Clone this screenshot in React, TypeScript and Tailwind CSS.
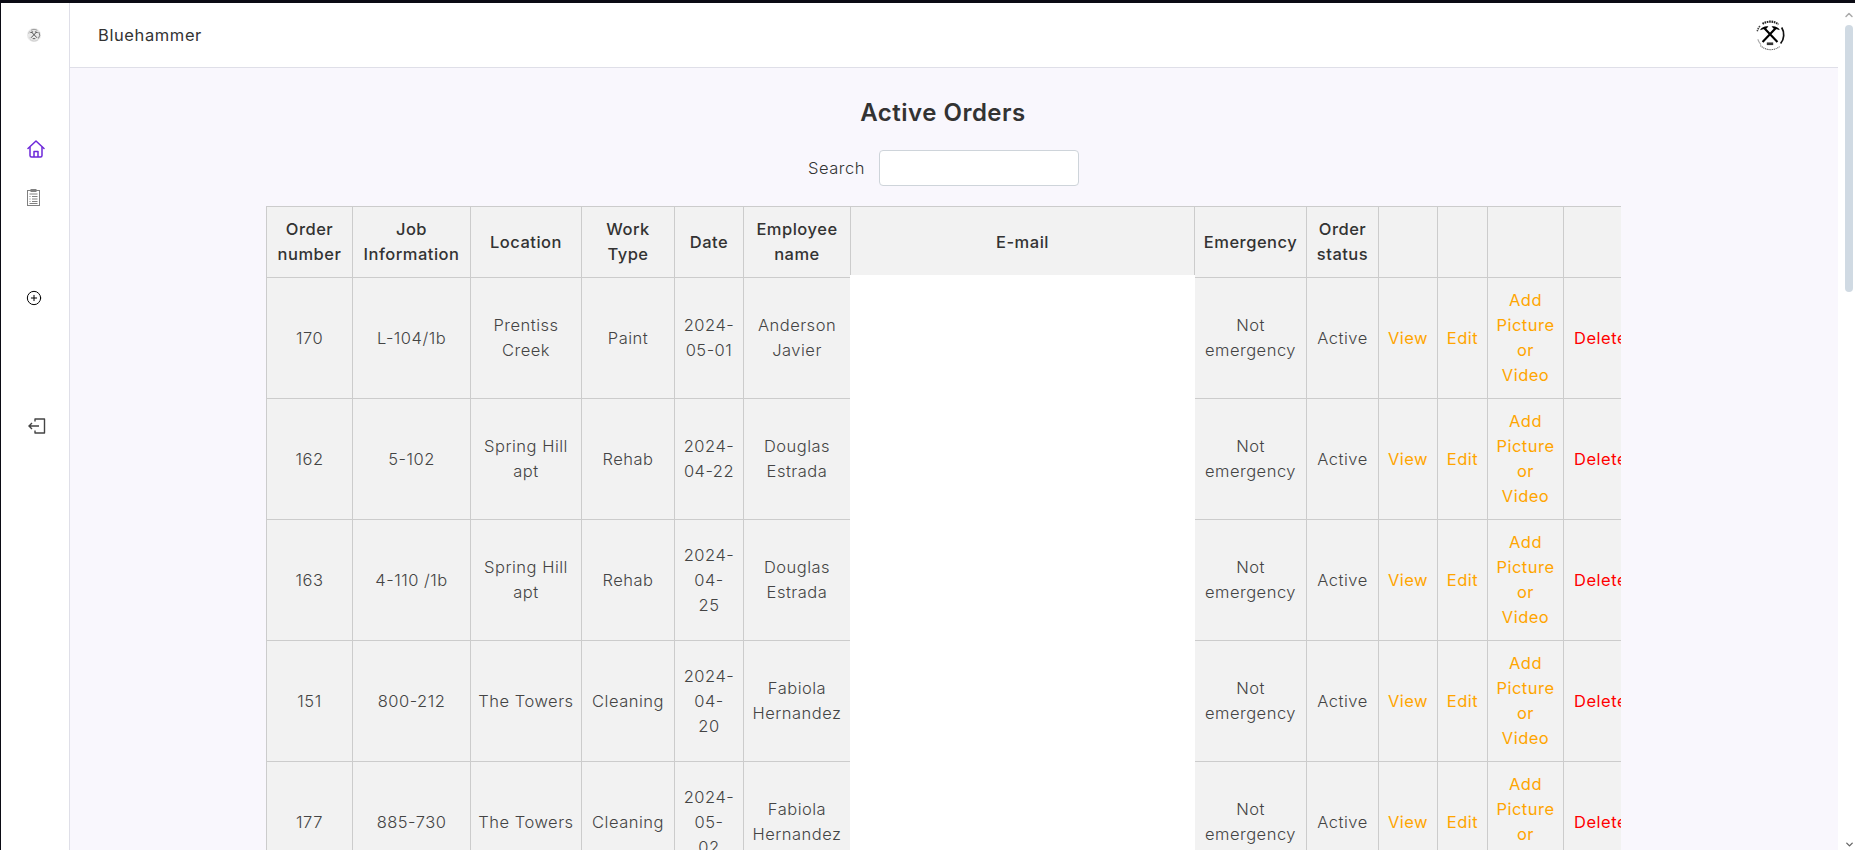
import { ChevronDown, ChevronUp, CirclePlus } from 'lucide-react'

const orders = [
  { id: '170', job: 'L-104/1b', location: 'Prentiss Creek', type: 'Paint', date: '2024-\n05-01', name: 'Anderson Javier' },
  { id: '162', job: '5-102', location: 'Spring Hill apt', type: 'Rehab', date: '2024-\n04-22', name: 'Douglas Estrada' },
  { id: '163', job: '4-110 /1b', location: 'Spring Hill apt', type: 'Rehab', date: '2024-\n04-\n25', name: 'Douglas Estrada' },
  { id: '151', job: '800-212', location: 'The Towers', type: 'Cleaning', date: '2024-\n04-\n20', name: 'Fabiola Hernandez' },
  { id: '177', job: '885-730', location: 'The Towers', type: 'Cleaning', date: '2024-\n05-\n02', name: 'Fabiola Hernandez' },
]

const headers = [
  'Order number',
  'Job Information',
  'Location',
  'Work Type',
  'Date',
  'Employee name',
  'E-mail',
  'Emergency',
  'Order status',
  '',
  '',
  '',
  '',
]

const colClasses = [
  'w-[86px]',
  'w-[118px]',
  'w-[111px]',
  'w-[93px]',
  'w-[69px]',
  'w-[107px]',
  'w-[344px]',
  'w-[112px]',
  'w-[72px]',
  'w-[59px]',
  'w-[50px]',
  'w-[76px]',
  'w-[80px]',
]

function PickaxeLogo({ className }: { className: string }) {
  return (
    <svg viewBox="0 0 32 32" className={className}>
      <path d="M9 5.500a13 13 0 0 1 15 .5" fill="none" stroke="#222" strokeWidth="2" strokeDasharray="1.500 .7" />
      <path d="M6.500 7.500a13 13 0 0 0-2.500 5" fill="none" stroke="#444" strokeWidth="1.500" strokeDasharray="1.500 .7" />
      <path d="M27 9a13 13 0 0 1-1 15" fill="none" stroke="#111" strokeWidth="1.600" />
      <path d="M4.500 20a13 13 0 0 0 3 5" fill="none" stroke="#aaa" strokeWidth="1" />
      <path d="M7 26a14 14 0 0 0 18 1" fill="none" stroke="#555" strokeWidth="1" strokeDasharray="1 .7" />
      <path d="M9 22.500 21.500 9.500M23 22.500 10.500 9.500" stroke="#000" strokeWidth="2" />
      <path d="M17.500 8c3-.5 6 .5 8 3.500-2-1-4-1.500-6-1.500zM14.500 8c-3-.5-6 .5-8 3.500 2-1 4-1.500 6-1.500z" fill="#000" />
      <rect x="13" y="23" width="6" height="2.500" fill="#333" />
    </svg>
  )
}

function Sidebar() {
  return (
    <aside className="flex w-[69px] shrink-0 flex-col border-r border-[#dfdfe8] bg-white">
      <div className="flex h-[64px] shrink-0 items-center pl-[26px]">
        <PickaxeLogo className="h-[14px] w-[14px] rounded-full bg-[#e2e2e2] opacity-75" />
      </div>
      <div className="mt-[73px] pl-[26px]">
        <svg viewBox="0 0 18 18" className="h-[18px] w-[18px]" fill="none" stroke="#6d28d9" strokeWidth="1.500" strokeLinejoin="round">
          <path d="M1 8.500 9 1l8 7.500" strokeLinecap="round" />
          <path d="M3 7v8.500a1.500 1.500 0 0 0 1.500 1.500h9a1.500 1.500 0 0 0 1.500-1.500V7" />
          <path d="M7 17v-5.500h4V17" />
        </svg>
      </div>
      <div className="mt-[31px] pl-[26px]">
        <svg viewBox="0 0 14 17" className="h-[17px] w-[14px]" fill="none" stroke="#808080" strokeWidth="1">
          <rect x=".5" y="1.500" width="12" height="15" />
          <rect x="4" y=".5" width="5" height="2" fill="#808080" />
          <path d="M2.500 5h8M2.500 7.500h1M5 7.500h5.500M2.500 10h1M5 10h5.500M2.500 12.500h1M5 12.500h5.500M2.500 14.500h8" />
        </svg>
      </div>
      <div className="mt-[84px] pl-[25px]">
        <CirclePlus className="h-[16px] w-[16px] text-black" strokeWidth={1.500} />
      </div>
      <div className="mt-[112px] pl-[27px]">
        <svg viewBox="0 0 18 16" className="h-[16px] w-[18px]" fill="none" stroke="#444" strokeWidth="1.400">
          <path d="M7 3.500V1h9.500v14H7v-2.500" strokeLinejoin="round" />
          <path d="M11 8H1M4 5 1 8l3 3" />
        </svg>
      </div>
    </aside>
  )
}

export default function App() {
  return (
    <div className="flex h-[850px] w-[1855px] flex-col overflow-hidden bg-white font-['Inter','Liberation_Sans',sans-serif] text-[#333]">
      <div className="h-[3px] shrink-0 bg-[#0b0b14]" />
      <div className="flex min-h-0 flex-1">
        <div className="w-px shrink-0 bg-[#0b0b14]" />
        <Sidebar />
        <div className="flex min-w-0 flex-1 flex-col">
          <header className="flex h-[65px] shrink-0 items-center justify-between border-b border-[#dfdfe8] bg-white pl-[28px] pr-[51px]">
            <span className="text-[16.500px] tracking-[0.6px] text-[#333]">Bluehammer</span>
            <PickaxeLogo className="h-[34px] w-[34px]" />
          </header>
          <main className="min-h-0 flex-1 overflow-hidden bg-[#f9f7fd]">
            <h1 className="mt-[30px] w-[1746px] text-center text-[24px] leading-[30px] font-semibold tracking-[0.5px] text-[#333]">
              Active Orders
            </h1>
            <div className="mt-[22px] flex w-[1747px] items-center justify-center gap-[14px]">
              <label className="text-[16.500px] font-light tracking-[0.5px] text-[#333]">Search</label>
              <input className="h-[36px] w-[200px] rounded border border-[#ced4da] bg-white" />
            </div>
            <div className="relative mt-[20px] ml-[196px] w-[1355px] overflow-hidden">
              <table className="w-[1377px] table-fixed border-collapse text-center text-[16.500px] leading-[25px] tracking-[0.5px]">
                <colgroup>
                  {colClasses.map((c, i) => (
                    <col key={i} className={c} />
                  ))}
                </colgroup>
                <thead>
                  <tr className="h-[71px] bg-[#f2f2f2]">
                    {headers.map((h, i) => (
                      <th key={i} className="border border-[#ccc] px-[8px] font-medium text-[#333]">
                        {h}
                      </th>
                    ))}
                  </tr>
                </thead>
                <tbody>
                  {orders.map((o) => (
                    <tr key={o.id} className="h-[121px] bg-[#f2f2f2] font-light text-[#444]">
                      <td className="border border-[#ccc] px-[8px]">{o.id}</td>
                      <td className="border border-[#ccc] px-[8px]">{o.job}</td>
                      <td className="border border-[#ccc] px-[4px]">{o.location}</td>
                      <td className="border border-[#ccc] px-[8px]">{o.type}</td>
                      <td className="border border-[#ccc] px-[8px] whitespace-pre-line">{o.date}</td>
                      <td className="border border-[#ccc] px-[8px]">{o.name}</td>
                      <td className="border border-[#ccc] px-[8px]" />
                      <td className="border border-[#ccc] px-[8px]">Not emergency</td>
                      <td className="border border-[#ccc] px-[8px]">Active</td>
                      <td className="border border-[#ccc] px-[8px] font-normal text-[#ffa500]">View</td>
                      <td className="border border-[#ccc] px-[8px] font-normal text-[#ffa500]">Edit</td>
                      <td className="border border-[#ccc] px-[8px] font-normal text-[#ffa500]">Add Picture or Video</td>
                      <td className="border border-[#ccc] pl-[10px] whitespace-nowrap text-left font-normal text-[#ff0000]">Delete</td>
                    </tr>
                  ))}
                </tbody>
              </table>
              {/* e-mail column is blanked out in the screenshot */}
              <div className="absolute top-[69px] bottom-0 left-[584px] w-[345px] bg-white" />
            </div>
          </main>
        </div>
        <div className="relative w-[17px] shrink-0 bg-white">
          <ChevronUp className="absolute top-[6px] left-[5px] h-[12px] w-[12px] text-[#aaa]" strokeWidth={3} />
          <div className="absolute top-[22px] left-[7px] h-[267px] w-[8px] rounded-full bg-[#d0dae3]" />
          <ChevronDown className="absolute bottom-[0px] left-[6px] h-[11px] w-[11px] text-[#666]" strokeWidth={3} />
        </div>
      </div>
    </div>
  )
}
